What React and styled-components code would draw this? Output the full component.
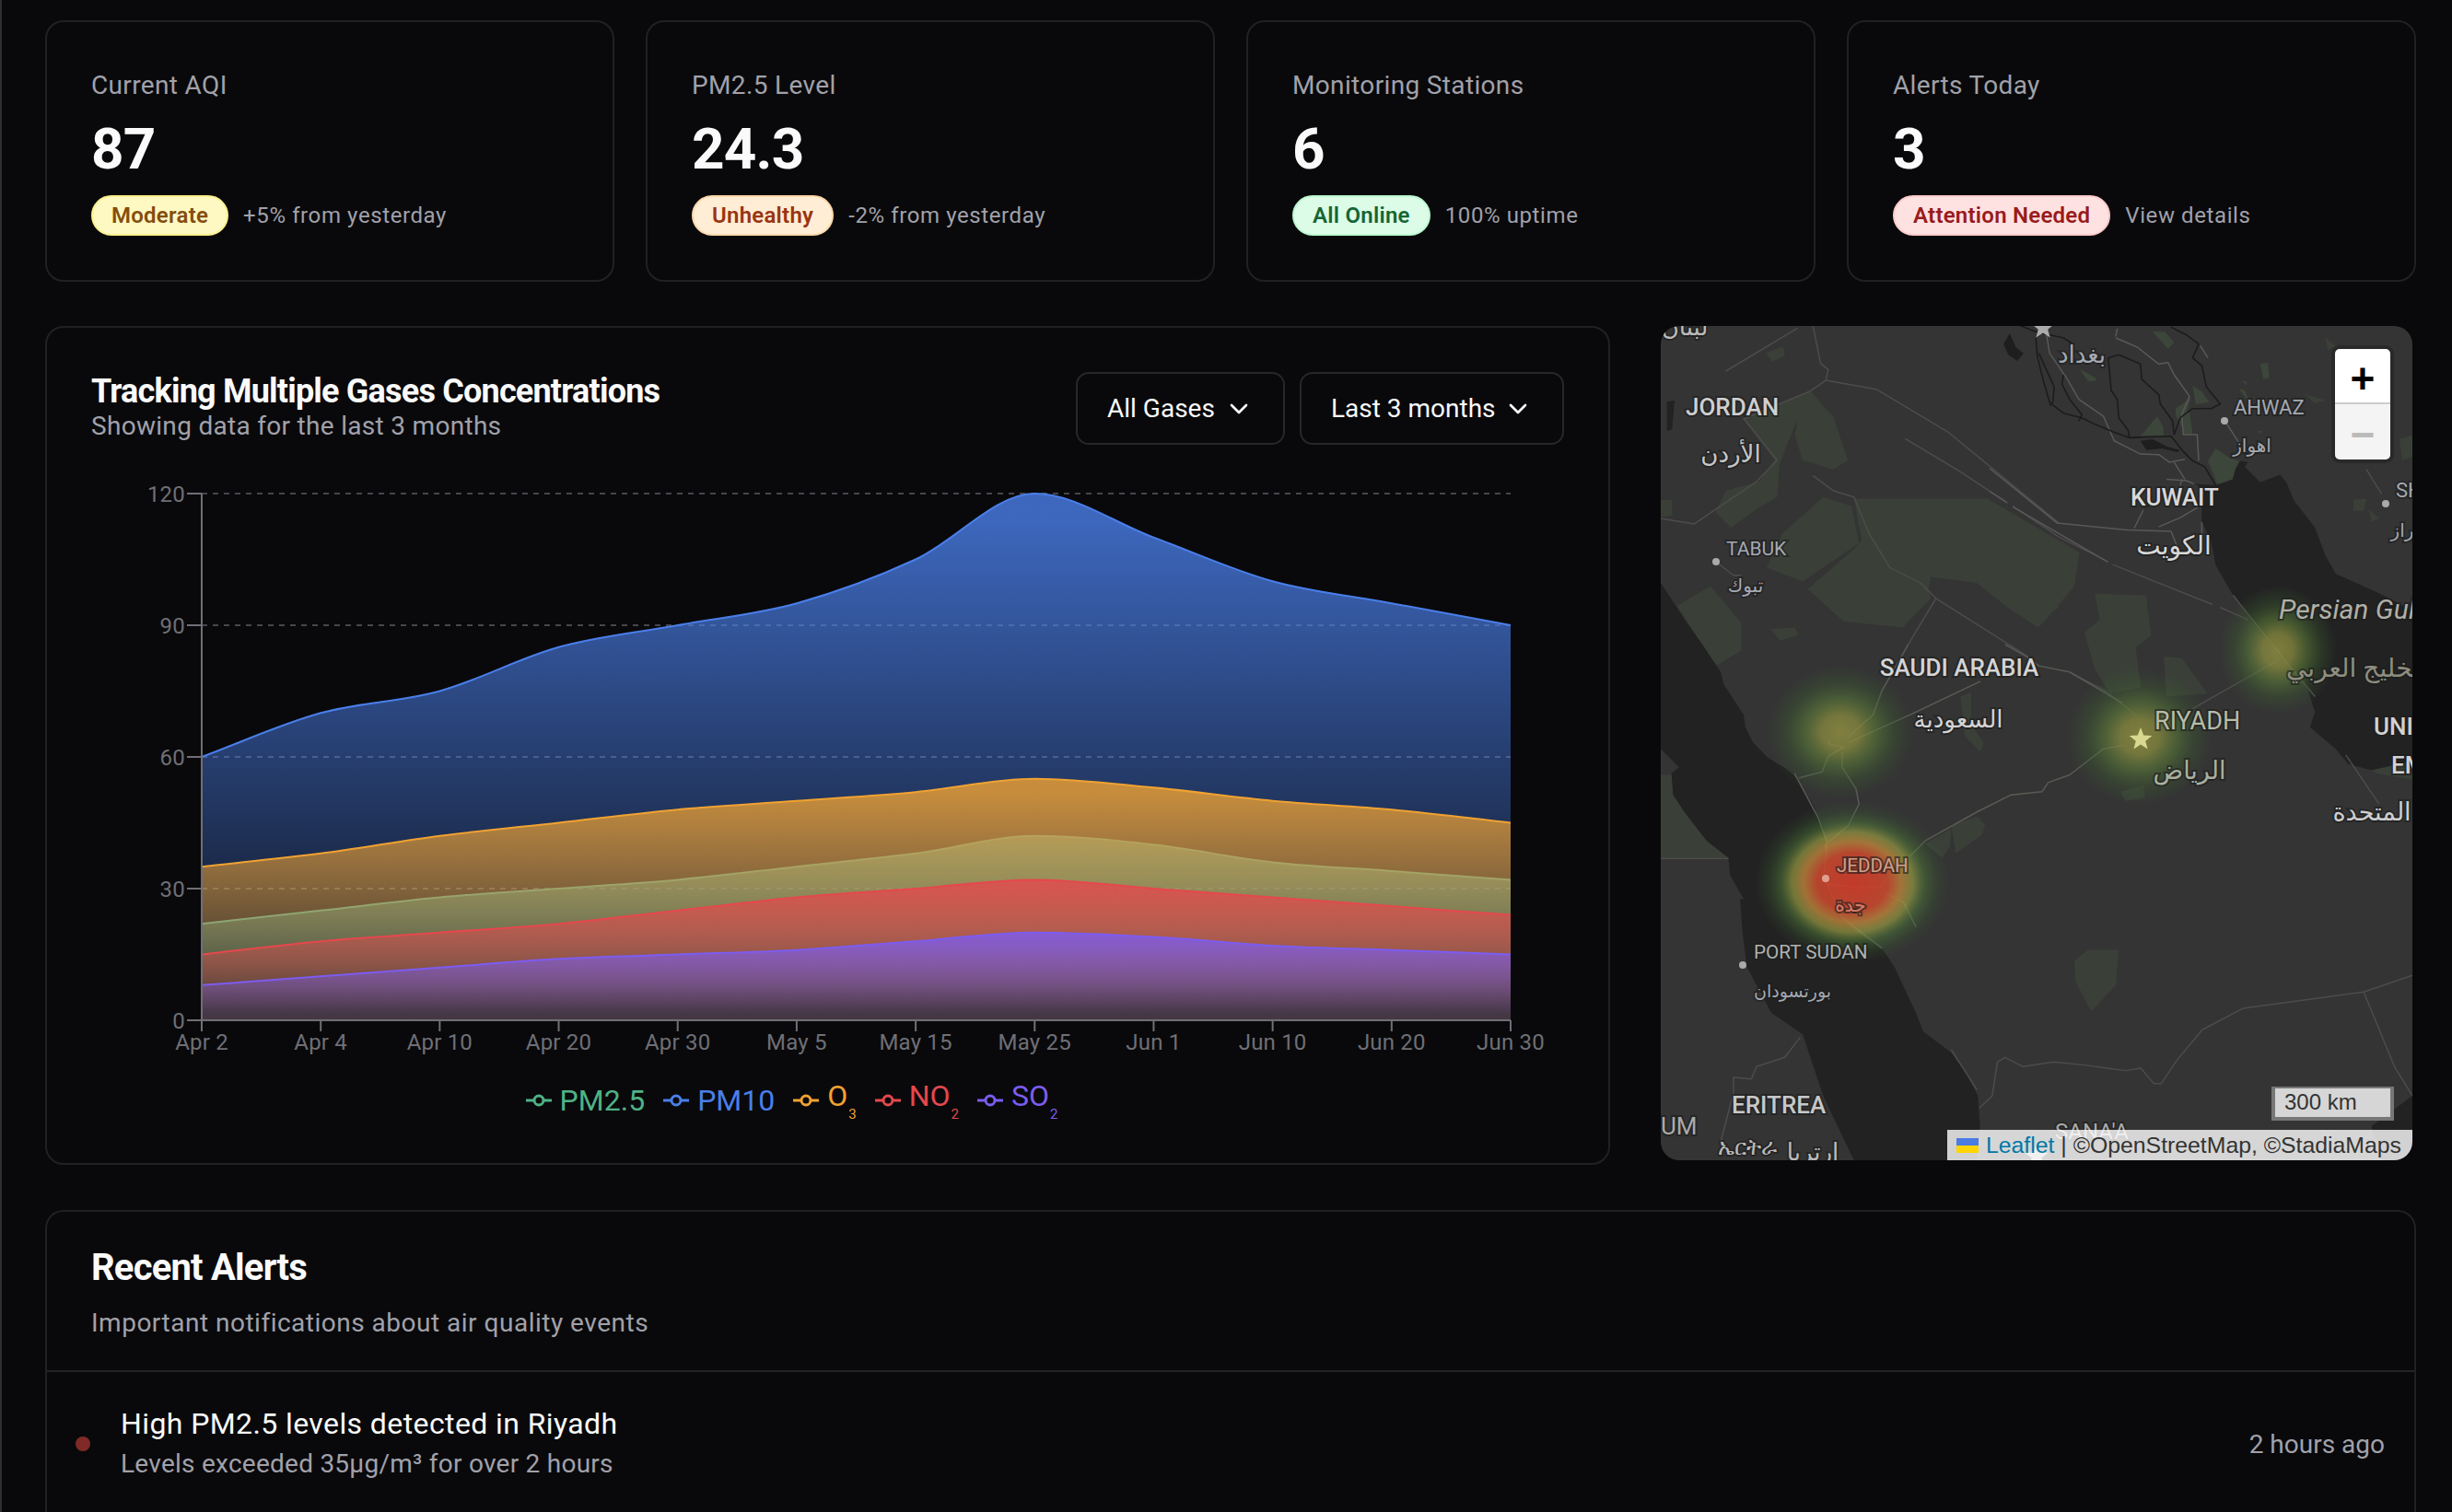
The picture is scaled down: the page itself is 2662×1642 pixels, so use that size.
import React from "react";
import styled, { createGlobalStyle } from "styled-components";
import { ChevronDown } from "lucide-react";

const GlobalStyle = createGlobalStyle`
  html, body {
    margin: 0;
    height: 100%;
    background: #09090b;
    overflow: hidden;
  }
  * { box-sizing: border-box; }
`;

const font = `Roboto, "DejaVu Sans", "Noto Sans", sans-serif`;

const stats = [
  { label: "Current AQI", value: "87", badge: "Moderate", tone: "yellow", note: "+5% from yesterday" },
  { label: "PM2.5 Level", value: "24.3", badge: "Unhealthy", tone: "orange", note: "-2% from yesterday" },
  { label: "Monitoring Stations", value: "6", badge: "All Online", tone: "green", note: "100% uptime" },
  { label: "Alerts Today", value: "3", badge: "Attention Needed", tone: "red", note: "View details" },
];

const badgeTones = {
  yellow: { bg: "#fef9c3", border: "#fef08a", color: "#854d0e" },
  orange: { bg: "#ffedd5", border: "#fed7aa", color: "#9a3412" },
  green: { bg: "#dcfce7", border: "#bbf7d0", color: "#166534" },
  red: { bg: "#fee2e2", border: "#fecaca", color: "#991b1b" },
};

const ticks = ["Apr 2", "Apr 4", "Apr 10", "Apr 20", "Apr 30", "May 5", "May 15", "May 25", "Jun 1", "Jun 10", "Jun 20", "Jun 30"];

const series = [
  { id: "pm25", name: "PM2.5", color: "#4fb286", values: [22, 25, 28, 30, 32, 35, 38, 42, 40, 36, 34, 32] },
  { id: "pm10", name: "PM10", color: "#4a7fea", values: [60, 70, 75, 85, 90, 95, 105, 120, 110, 100, 95, 90] },
  { id: "o3", name: "O", sub: "3", color: "#f0a232", values: [35, 38, 42, 45, 48, 50, 52, 55, 53, 50, 48, 45] },
  { id: "no2", name: "NO", sub: "2", color: "#e5484d", values: [15, 18, 20, 22, 25, 28, 30, 32, 30, 28, 26, 24] },
  { id: "so2", name: "SO", sub: "2", color: "#7c5cf0", values: [8, 10, 12, 14, 15, 16, 18, 20, 19, 17, 16, 15] },
];

const plot = { left: 120, right: 1541, top: 36, bottom: 608 };
const xAt = (i) => plot.left + (i * (plot.right - plot.left)) / 11;
const yAt = (v) => plot.bottom - (v * (plot.bottom - plot.top)) / 120;

// same maths as d3 curveMonotoneX, which is what the chart lib draws
function monotoneLine(pts) {
  const n = pts.length;
  const dx = [];
  const m = [];
  for (let i = 0; i < n - 1; i++) {
    dx[i] = pts[i + 1][0] - pts[i][0];
    m[i] = (pts[i + 1][1] - pts[i][1]) / dx[i];
  }
  const t = [m[0]];
  for (let i = 1; i < n - 1; i++) {
    const s = (Math.sign(m[i - 1]) + Math.sign(m[i])) *
      Math.min(Math.abs(m[i - 1]), Math.abs(m[i]), 0.5 * Math.abs((m[i - 1] * dx[i] + m[i] * dx[i - 1]) / (dx[i - 1] + dx[i])));
    t[i] = s || 0;
  }
  t[n - 1] = m[n - 2];
  let d = `M${pts[0][0]},${pts[0][1]}`;
  for (let i = 0; i < n - 1; i++) {
    const h = dx[i] / 3;
    d += `C${pts[i][0] + h},${pts[i][1] + t[i] * h} ${pts[i + 1][0] - h},${pts[i + 1][1] - t[i + 1] * h} ${pts[i + 1][0]},${pts[i + 1][1]}`;
  }
  return d;
}

const Page = styled.div`
  height: 100vh;
  overflow: hidden;
  border-left: 2px solid #2e2e31;
  padding: 22px 39px 0 47px;
  background: #09090b;
  color: #fafafa;
  font-family: ${font};
`;

const StatGrid = styled.div`
  display: grid;
  grid-template-columns: repeat(4, 618px);
  column-gap: 34px;
`;

const Card = styled.div`
  background: #09090b;
  border: 2px solid #212124;
  border-radius: 20px;
`;

const StatCard = styled(Card)`
  height: 284px;
  padding: 48px;
`;

const StatLabel = styled.div`
  font-size: 28px;
  line-height: 42px;
  letter-spacing: 0.35px;
  color: #a1a1aa;
`;

const StatValue = styled.div`
  margin-top: 12px;
  font-size: 62px;
  line-height: 72px;
  font-weight: 700;
  letter-spacing: -0.8px;
  color: #fafafa;
`;

const StatFoot = styled.div`
  display: flex;
  align-items: center;
  gap: 16px;
  margin-top: 14px;
`;

const Badge = styled.span`
  display: inline-flex;
  align-items: center;
  height: 44px;
  padding: 0 20px;
  border-radius: 22px;
  font-size: 24px;
  font-weight: 600;
  letter-spacing: 0.25px;
  background: ${(p) => badgeTones[p.$tone].bg};
  border: 2px solid ${(p) => badgeTones[p.$tone].border};
  color: ${(p) => badgeTones[p.$tone].color};
`;

const Note = styled.span`
  font-size: 24px;
  letter-spacing: 0.6px;
  color: #a1a1aa;
`;

const MiddleRow = styled.div`
  display: grid;
  grid-template-columns: 1699px 816px;
  column-gap: 55px;
  align-items: start;
  margin-top: 48px;
`;

const ChartCard = styled(Card)`
  height: 911px;
  padding: 48px 48px 0;
`;

const ChartHead = styled.div`
  display: flex;
  justify-content: space-between;
  align-items: flex-start;
  margin-bottom: 17px;
`;

const ChartTitle = styled.h2`
  margin: 0;
  font-size: 36px;
  line-height: 42px;
  font-weight: 700;
  letter-spacing: -0.8px;
`;

const ChartSub = styled.div`
  font-size: 28px;
  line-height: 34px;
  letter-spacing: 0.3px;
  color: #a1a1aa;
`;

const Selects = styled.div`
  display: flex;
  gap: 16px;
`;

const SelectButton = styled.button`
  display: flex;
  align-items: center;
  justify-content: space-between;
  height: 79px;
  width: ${(p) => p.$w}px;
  padding: 0 32px 0 32px;
  background: transparent;
  border: 2px solid #27272a;
  border-radius: 14px;
  color: #fafafa;
  font-family: inherit;
  font-size: 28px;
`;

const ChartSvg = styled.svg`
  display: block;
  width: 1600px;
  height: 660px;
`;

const AxisText = styled.text`
  font-size: 24px;
  letter-spacing: 0.2px;
  fill: #6f6f76;
  font-family: ${font};
`;

const Legend = styled.div`
  display: flex;
  justify-content: center;
  gap: 20px;
  padding-right: 78px;
  margin-top: 15px;
`;

const LegendItem = styled.div`
  display: flex;
  align-items: center;
  gap: 9px;
  height: 40px;
  font-size: 32px;
  color: ${(p) => p.$color};
`;

const LegendSub = styled.span`
  font-size: 15px;
  vertical-align: -14px;
  margin-left: 1px;
`;

const MapPanel = styled.div`
  position: relative;
  height: 906px;
  border-radius: 20px;
  overflow: hidden;
  background: #343434;
`;

const MapLayer = styled.svg`
  position: absolute;
  inset: 0;
  width: 816px;
  height: 906px;
`;

const MapText = styled.text`
  font-family: ${font};
  font-size: ${(p) => p.$size}px;
  font-weight: ${(p) => (p.$strong ? 500 : 400)};
  font-style: ${(p) => (p.$italic ? "italic" : "normal")};
  fill: ${(p) => p.$fill};
  stroke: #1e1e1e;
  stroke-opacity: 0.6;
  stroke-width: 4px;
  paint-order: stroke;
  text-anchor: ${(p) => (p.$center ? "middle" : "start")};
  dominant-baseline: ${(p) => (p.$center ? "middle" : "alphabetic")};
`;

const TraceShape = styled.path`
  vector-effect: non-scaling-stroke;
  stroke-linejoin: round;
  fill: ${(p) => p.$fill || "none"};
  stroke: ${(p) => p.$stroke || "none"};
  stroke-width: ${(p) => p.$width || 1.5}px;
`;

const ZoomBox = styled.div`
  position: absolute;
  top: 25px;
  left: 732px;
  width: 60px;
  border-radius: 5px;
  overflow: hidden;
  box-shadow: 0 0 0 4px rgba(0, 0, 0, 0.2);
`;

const ZoomButton = styled.div`
  height: 60px;
  padding-top: 5px;
  display: flex;
  align-items: center;
  justify-content: center;
  font-family: "Liberation Sans", sans-serif;
  font-size: 46px;
  font-weight: 700;
  line-height: 1;
  background: ${(p) => (p.$off ? "#f4f4f4" : "#fff")};
  color: ${(p) => (p.$off ? "#bbb" : "#000")};
  border-bottom: ${(p) => (p.$off ? "none" : "2px solid #ccc")};
`;

const ScaleBar = styled.div`
  position: absolute;
  left: 663px;
  top: 826px;
  width: 133px;
  height: 37px;
  padding-left: 10px;
  border: 4px solid #777;
  border-top-width: 2px;
  background: rgba(255, 255, 255, 0.8);
  font-family: "Liberation Sans", sans-serif;
  font-size: 24px;
  line-height: 30px;
  color: #333;
`;

const Attribution = styled.div`
  position: absolute;
  right: 0;
  bottom: 0;
  height: 33px;
  width: 505px;
  display: flex;
  align-items: center;
  gap: 8px;
  padding-left: 10px;
  background: rgba(255, 255, 255, 0.8);
  font-family: "Liberation Sans", sans-serif;
  font-size: 24.8px;
  color: #333;
  white-space: nowrap;
`;

const AttrLink = styled.span`
  color: #0078a8;
`;

const AlertsCard = styled(Card)`
  margin-top: 49px;
  border-bottom: none;
  border-radius: 20px 20px 0 0;
  height: 400px;
`;

const AlertsHead = styled.div`
  padding: 41px 48px 31px;
  border-bottom: 2px solid #232326;
`;

const AlertsTitle = styled.h2`
  margin: 0;
  font-size: 40px;
  line-height: 40px;
  font-weight: 700;
  letter-spacing: -0.8px;
`;

const AlertsSub = styled.div`
  margin-top: 20px;
  font-size: 28px;
  line-height: 40px;
  letter-spacing: 0.5px;
  color: #a1a1aa;
`;

const AlertRow = styled.div`
  display: flex;
  align-items: center;
  padding: 34px 32px 35px 31px;
`;

const AlertDot = styled.span`
  flex: none;
  width: 16px;
  height: 16px;
  border-radius: 50%;
  background: #7f2a26;
`;

const AlertBody = styled.div`
  flex: 1;
  margin-left: 33px;
`;

const AlertTitle = styled.div`
  font-size: 32px;
  line-height: 44px;
  letter-spacing: 0.4px;
  color: #fafafa;
`;

const AlertText = styled.div`
  font-size: 28px;
  line-height: 44px;
  letter-spacing: 0.25px;
  color: #a1a1aa;
`;

const AlertTime = styled.div`
  font-size: 28px;
  color: #a1a1aa;
`;

function GasChart() {
  return (
    <ChartSvg viewBox="0 0 1600 660">
      <defs>
        {series.map((s) => (
          <linearGradient key={s.id} id={`fill-${s.id}`} x1="0" y1="0" x2="0" y2="1">
            <stop offset="5%" stopColor={s.color} stopOpacity="0.8" />
            <stop offset="95%" stopColor={s.color} stopOpacity="0.1" />
          </linearGradient>
        ))}
      </defs>

      {[120, 90, 60, 30].map((v) => (
        <line key={v} x1={plot.left} x2={plot.right} y1={yAt(v)} y2={yAt(v)} stroke="#46464c" strokeWidth="2" strokeDasharray="6 6" />
      ))}

      {series.map((s) => {
        const line = monotoneLine(s.values.map((v, i) => [xAt(i), yAt(v)]));
        return (
          <g key={s.id}>
            <path d={`${line}L${plot.right},${plot.bottom}L${plot.left},${plot.bottom}Z`} fill={`url(#fill-${s.id})`} />
            <path d={line} fill="none" stroke={s.color} strokeWidth="2" />
          </g>
        );
      })}

      <path d={`M${plot.left},${plot.top}V${plot.bottom}H${plot.right}`} fill="none" stroke="#6f6f76" strokeWidth="2" />
      {[120, 90, 60, 30, 0].map((v) => (
        <g key={v}>
          <line x1={plot.left - 16} x2={plot.left} y1={yAt(v)} y2={yAt(v)} stroke="#6f6f76" strokeWidth="2" />
          <AxisText x={plot.left - 18} y={yAt(v) + 9} textAnchor="end">{v}</AxisText>
        </g>
      ))}
      {ticks.map((t, i) => (
        <g key={t}>
          <line x1={xAt(i)} x2={xAt(i)} y1={plot.bottom} y2={plot.bottom + 12} stroke="#6f6f76" strokeWidth="2" />
          <AxisText x={xAt(i)} y={640} textAnchor="middle">{t}</AxisText>
        </g>
      ))}
    </ChartSvg>
  );
}

// map shapes are traced from crops of the map, so each set keeps the crop's coordinates
const cropNorth = "translate(665,42) scale(0.6,1)";
const cropWest = "translate(23,1080) scale(0.6,1)";

const seaPaths = [
  "M23,880L70,1000L104,1080L140,1170L146,1210L185,1310L188,1350L203,1400L233,1450L263,1480L287,1510L323,1610L341,1680L347,1740L341,1840L377,1970L407,2020L455,2070L479,2130L521,2280L535,2340L590,2410L620,2480L642,2550L646,2650L640,2760L400,2760L340,2550L300,2350L239,2280L191,2130L182,2010L178,1910L185,1910L158,1830L155,1775L113,1720L71,1630L47,1570L44,1500L59,1480L23,1420Z",
  "M1064,557L1106,562L1139,542L1145,507L1154,482L1169,487L1163,502L1193,552L1232,527L1244,552L1259,612L1300,700L1320,790L1340,850L1420,910L1490,970L1490,1460L1410,1490L1365,1470L1340,1420L1290,1350L1300,1300L1280,1200L1230,1120L1180,1010L1140,920L1106,822L1097,742L1079,682L1079,632L1085,572Z",
  "M1490,2550L1410,2650L1430,2760L1490,2760Z",
  "M35,290L50,285L45,380L35,385Z",
];

const greenPaths = [
  "M185,345L315,255L360,340L388,480L360,510L300,480L285,400L290,345L255,490L250,600L210,640L160,700L130,650L150,580L215,550L245,480Z",
  "M260,720L340,600L395,630L410,750L300,875L230,830Z",
  "M400,605L660,605L840,780L830,890L800,950L760,1025L700,960L640,880L550,860L545,900L550,930L495,1025L380,1005L310,900L400,770L415,740Z",
  "M55,955L120,890L180,1010L180,1100L130,1150Z",
  "M104,1080L128,1150L179,1080Z",
  "M870,915L970,920L980,1050L950,1090L880,1000Z",
  "M850,1040L880,1000L950,1090L960,1220L900,1240L870,1160Z",
  "M1005,1120L1040,1125L1090,1240L1010,1250Z",
  "M640,755L680,755L760,850L800,960L770,990L690,870L640,800Z",
  "M790,780L835,800L830,890L790,860Z",
  "M238,1030L285,1025L292,1050L255,1068Z",
  "M228,130L262,110L265,140L240,160Z",
  "M23,610L45,610L45,660L23,665Z",
  "M1280,265L1320,285L1300,295Z",
  "M1465,410L1490,400L1490,470L1470,480Z",
  "M1375,610L1400,605L1395,645L1375,645Z",
  "M1405,640L1425,670L1410,680Z",
  "M1320,80L1340,110L1325,120Z",
  "M920,1560L965,1540L968,1580L930,1590Z",
  "M23,1505L44,1505L47,1570L71,1630L113,1720L155,1775L23,1775Z",
  "M1360,1450L1490,1460L1490,1520L1420,1500Z",
];

const borderPaths = [
  "M23,670L88,688L130,640L210,550L250,480L185,345L315,255L345,220L445,250L585,390L800,685",
  "M150,190L290,50",
  "M345,220L350,185L335,165L320,43",
  "M500,410L610,520L700,620",
  "M710,630L800,730L890,805",
  "M905,820L1100,950",
  "M1115,960L1170,1000",
  "M320,530L360,580L400,600L430,720L470,830L530,880L560,930L740,1120",
  "M560,930L506,1080",
  "M821,1170L890,1230L950,1310",
  "M1060,1290L1230,1130",
  "M1140,920L1240,1130L1300,1250",
  "M590,2400L640,2530",
  "M645,2590L670,2550L680,2440L695,2425L730,2455L790,2440L850,2450L930,2468L960,2460L985,2510L1000,2510L1030,2435L1080,2335L1160,2265L1395,2212L1490,2158",
  "M1395,2212L1455,2455L1490,2550",
  "M295,2360L265,2425L210,2455L200,2495L165,2490L165,2540L140,2700",
  "M23,1777L155,1777",
  "M1360,1440L1425,1600",
  "M1400,510L1430,590",
  "M130,810L165,855L180,855",
];

const north = {
  green: [
    "M490,360L545,295L565,330L565,360Z",
    "M660,195L690,215L715,250L670,255Z",
    "M605,270L655,235L625,330L605,290Z",
    "M630,285L650,280L660,350L630,355Z",
    "M530,20L570,20L600,55L580,75Z",
    "M880,125L905,120L910,170L890,175Z",
    "M710,440L735,400L780,430L810,440L790,510L740,515Z",
    "M810,205L830,210L850,260Z",
    "M820,178L840,185L830,190Z",
    "M290,140L345,170L345,180L320,180Z",
    "M870,340L890,345L880,350Z",
  ],
  dark: [
    "M45,60L65,25L85,70L110,90L90,115L60,95Z",
    "M490,375L530,370L580,395L620,405L610,412L560,400L510,405Z",
  ],
  rivers: [
    "M150,40L155,100L175,180L195,250L240,285L300,300L340,320L400,345L455,365L520,362L590,360L630,410L660,440L700,460L735,520",
    "M160,90L210,200L205,250L195,260",
    "M240,160L235,190L260,240L300,290L290,310",
    "M385,105L420,95L490,125L495,175L550,225L555,255L595,310L600,355",
    "M385,105L390,150L395,210L415,240L420,300L450,340L455,365",
    "M590,5L640,30L680,60L660,105L690,130L705,200L750,255L720,270L660,270L620,300L600,355",
    "M100,0L150,20L240,40L265,55",
  ],
  roads: [
    "M185,30L195,90L250,170L290,240L370,295L405,375L445,395L490,418L550,420L585,445L635,435",
    "M600,445L635,500",
    "M410,40L480,70L550,125L580,120L600,160L650,230L625,290L630,355L675,355L680,440",
    "M685,65L710,105",
    "M415,10L410,35",
    "M575,500L640,505L665,515",
    "M620,520L625,500",
    "M500,600L470,660",
    "M550,655L620,625L680,590",
    "M690,640L690,690",
    "M0,465L220,643L445,665L590,670L610,720",
    "M0,540L55,575",
    "M75,590L385,770",
    "M765,310L810,380",
  ],
};

const west = {
  green: [
    "M945,590L1030,560L1055,590L1045,620L960,680Z",
    "M860,650L945,600L940,660L915,695Z",
    "M975,170L1010,155L1010,260L1050,320L1040,350L990,300Z",
    "M1345,1030L1390,995L1490,995L1480,1110L1400,1195L1350,1100Z",
  ],
  roads: [
    "M610,320L820,225L1040,120",
    "M610,300L690,230L720,150L805,0",
    "M1120,0L1190,40L1230,70L1330,90L1500,190",
    "M450,435L525,415L545,365L595,335",
    "M435,420L510,560L540,640L530,760L590,890L720,990",
    "M590,350L590,400L635,470L645,520L610,590L550,640L530,660",
    "M1500,330L1440,340L1330,425L1260,450L1240,480L1140,490L1030,545L860,640L810,690L720,780",
    "M720,805L790,840L830,920",
    "M540,780L620,790L720,790",
    "M545,310L550,325L595,335",
  ],
};

const labels = [
  { t: "لبنان", x: 26, y: 3, size: 26, center: true, fill: "#bbb" },
  { t: "JORDAN", x: 27, y: 97, size: 26, fill: "#cfcfcf", strong: true },
  { t: "الأردن", x: 76, y: 141, size: 26, center: true, fill: "#c8c8c8" },
  { t: "بغداد", x: 457, y: 33, size: 26, center: true, fill: "#a4a9b2" },
  { t: "AHWAZ", x: 622, y: 96, size: 22, fill: "#a4a9b2" },
  { t: "اهواز", x: 642, y: 132, size: 20, center: true, fill: "#a4a9b2" },
  { t: "SH", x: 798, y: 186, size: 22, fill: "#a4a9b2" },
  { t: "راز", x: 805, y: 224, size: 20, center: true, fill: "#a4a9b2" },
  { t: "KUWAIT", x: 558, y: 188, size: 26, center: true, fill: "#d8d8d8", strong: true },
  { t: "الكويت", x: 557, y: 241, size: 28, center: true, fill: "#d8d8d8" },
  { t: "TABUK", x: 71, y: 249, size: 21, fill: "#a4a9b2" },
  { t: "تبوك", x: 92, y: 284, size: 20, center: true, fill: "#a4a9b2" },
  { t: "Persian Gulf", x: 671, y: 318, size: 30, italic: true, fill: "#b0b0a6" },
  { t: "الخليج العربي", x: 679, y: 381, size: 28, fill: "#8e8e80" },
  { t: "SAUDI ARABIA", x: 324, y: 373, size: 26, center: true, fill: "#d4d4d4", strong: true },
  { t: "السعودية", x: 323, y: 429, size: 26, center: true, fill: "#d4d4d4" },
  { t: "RIYADH", x: 536, y: 438, size: 27, fill: "#b8bca8" },
  { t: "الرياض", x: 574, y: 485, size: 27, center: true, fill: "#a8b0a0" },
  { t: "UNI", x: 774, y: 444, size: 26, fill: "#d2d2d2", strong: true },
  { t: "EM", x: 793, y: 486, size: 26, fill: "#d2d2d2", strong: true },
  { t: "المتحدة", x: 772, y: 530, size: 27, center: true, fill: "#cfcfcf" },
  { t: "JEDDAH", x: 191, y: 593, size: 20.5, fill: "#d0a088" },
  { t: "جدة", x: 206, y: 631, size: 20, center: true, fill: "#dc7e68" },
  { t: "PORT SUDAN", x: 101, y: 687, size: 20.7, fill: "#aeb2b0" },
  { t: "بورتسودان", x: 143, y: 724, size: 19, center: true, fill: "#a4a9b2" },
  { t: "ERITREA", x: 77, y: 855, size: 26, fill: "#c8c8c8", strong: true },
  { t: "UM", x: 0, y: 878, size: 26, fill: "#aaa" },
  { t: "ኤርትራ", x: 62, y: 900, size: 24, fill: "#bbb" },
  { t: "ارتريا", x: 165, y: 899, size: 26, center: true, fill: "#bbb" },
  { t: "SANA'A", x: 468, y: 877, size: 24, center: true, fill: "#aaa" },
];

const placeDots = [
  [612, 103, "#aaa"], [787, 193, "#aaa"], [60, 256, "#aaa"], [89, 694, "#aaa"], [179, 600, "#e0a090"],
];

const starPoints = (cx, cy, r) =>
  Array.from({ length: 10 }, (_, i) => {
    const a = -Math.PI / 2 + (i * Math.PI) / 5;
    const rad = i % 2 ? r * 0.42 : r;
    return `${cx + rad * Math.cos(a)},${cy + rad * Math.sin(a)}`;
  }).join(" ");

function HeatMap() {
  return (
    <MapPanel>
      <MapLayer viewBox="23 43 1467 2717" preserveAspectRatio="none">
        {greenPaths.map((d) => <TraceShape key={d} d={d} $fill="#3a4038" />)}
        <g transform={cropNorth}>
          {north.green.map((d) => <TraceShape key={d} d={d} $fill="#3c463a" />)}
        </g>
        <g transform={cropWest}>
          {west.green.map((d) => <TraceShape key={d} d={d} $fill="#3a4038" />)}
        </g>
        {seaPaths.map((d) => <TraceShape key={d} d={d} $fill="#222" />)}
        {borderPaths.map((d) => <TraceShape key={d} d={d} $stroke="#4e4b4b" />)}
        <g transform={cropNorth}>
          {north.roads.map((d) => <TraceShape key={d} d={d} $stroke="#5a5858" />)}
          {north.rivers.map((d) => <TraceShape key={d} d={d} $stroke="#1c1c1c" $width={1.6} />)}
          {north.dark.map((d) => <TraceShape key={d} d={d} $fill="#1e1e1e" />)}
        </g>
        <g transform={cropWest}>
          {west.roads.map((d) => <TraceShape key={d} d={d} $stroke="#5a5a55" />)}
        </g>
      </MapLayer>

      <MapLayer viewBox="0 0 816 906">
        <defs>
          <radialGradient id="heat-hot">
            <stop offset="0%" stopColor="#cf3a2a" stopOpacity="0.92" />
            <stop offset="36%" stopColor="#c6482e" stopOpacity="0.9" />
            <stop offset="50%" stopColor="#b77f3a" stopOpacity="0.85" />
            <stop offset="62%" stopColor="#959a42" stopOpacity="0.7" />
            <stop offset="74%" stopColor="#4f7a38" stopOpacity="0.5" />
            <stop offset="88%" stopColor="#3a6030" stopOpacity="0.22" />
            <stop offset="100%" stopColor="#3a6030" stopOpacity="0" />
          </radialGradient>
          <radialGradient id="heat-warm">
            <stop offset="0%" stopColor="#8f8d42" stopOpacity="0.85" />
            <stop offset="26%" stopColor="#87893f" stopOpacity="0.78" />
            <stop offset="52%" stopColor="#587b38" stopOpacity="0.55" />
            <stop offset="76%" stopColor="#3e6130" stopOpacity="0.3" />
            <stop offset="100%" stopColor="#3a6030" stopOpacity="0" />
          </radialGradient>
        </defs>
        <ellipse cx="208" cy="604" rx="106" ry="88" fill="url(#heat-hot)" />
        <ellipse cx="195" cy="441" rx="80" ry="72" fill="url(#heat-warm)" />
        <ellipse cx="520" cy="446" rx="80" ry="74" fill="url(#heat-warm)" />
        <ellipse cx="670" cy="352" rx="64" ry="70" fill="url(#heat-warm)" />

        <polygon points={starPoints(521, 449, 13)} fill="#d8d890" />
        <polygon points={starPoints(415, 2, 13)} fill="#aaa" />
        <polygon points={starPoints(408, 902, 13)} fill="#bbb" />
        {placeDots.map(([x, y, c]) => <circle key={`${x}-${y}`} cx={x} cy={y} r="4" fill={c} />)}
        {labels.map((l) => (
          <MapText key={l.t} x={l.x} y={l.y} $size={l.size} $fill={l.fill} $strong={l.strong} $italic={l.italic} $center={l.center}>
            {l.t}
          </MapText>
        ))}
      </MapLayer>

      <ZoomBox>
        <ZoomButton>+</ZoomButton>
        <ZoomButton $off>−</ZoomButton>
      </ZoomBox>
      <ScaleBar>300 km</ScaleBar>
      <Attribution>
        <svg width="24" height="16" viewBox="0 0 12 8">
          <rect width="12" height="4" fill="#4c7be1" />
          <rect y="4" width="12" height="4" fill="#ffd500" />
        </svg>
        <span><AttrLink>Leaflet</AttrLink> | ©OpenStreetMap, ©StadiaMaps</span>
      </Attribution>
    </MapPanel>
  );
}

function LegendIcon({ color }) {
  return (
    <svg width="28" height="16" viewBox="0 0 28 16">
      <path d="M0,8H8M20,8H28" stroke={color} strokeWidth="3" />
      <circle cx="14" cy="8" r="5" fill="none" stroke={color} strokeWidth="3" />
    </svg>
  );
}

export default function App() {
  return (
    <>
      <GlobalStyle />
      <Page>
        <StatGrid>
          {stats.map((s) => (
            <StatCard key={s.label}>
              <StatLabel>{s.label}</StatLabel>
              <StatValue>{s.value}</StatValue>
              <StatFoot>
                <Badge $tone={s.tone}>{s.badge}</Badge>
                <Note>{s.note}</Note>
              </StatFoot>
            </StatCard>
          ))}
        </StatGrid>

        <MiddleRow>
          <ChartCard>
            <ChartHead>
              <div>
                <ChartTitle>Tracking Multiple Gases Concentrations</ChartTitle>
                <ChartSub>Showing data for the last 3 months</ChartSub>
              </div>
              <Selects>
                <SelectButton $w={227}>All Gases <ChevronDown size={32} /></SelectButton>
                <SelectButton $w={287}>Last 3 months <ChevronDown size={32} /></SelectButton>
              </Selects>
            </ChartHead>
            <GasChart />
            <Legend>
              {series.map((s) => (
                <LegendItem key={s.id} $color={s.color}>
                  <LegendIcon color={s.color} />
                  <span>{s.name}{s.sub && <LegendSub>{s.sub}</LegendSub>}</span>
                </LegendItem>
              ))}
            </Legend>
          </ChartCard>
          <HeatMap />
        </MiddleRow>

        <AlertsCard>
          <AlertsHead>
            <AlertsTitle>Recent Alerts</AlertsTitle>
            <AlertsSub>Important notifications about air quality events</AlertsSub>
          </AlertsHead>
          <AlertRow>
            <AlertDot />
            <AlertBody>
              <AlertTitle>High PM2.5 levels detected in Riyadh</AlertTitle>
              <AlertText>Levels exceeded 35μg/m³ for over 2 hours</AlertText>
            </AlertBody>
            <AlertTime>2 hours ago</AlertTime>
          </AlertRow>
        </AlertsCard>
      </Page>
    </>
  );
}
